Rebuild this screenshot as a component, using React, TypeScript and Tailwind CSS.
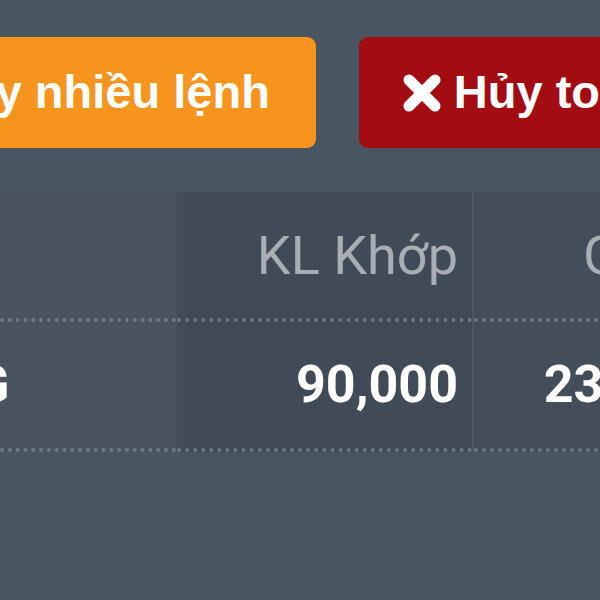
export default function App() {
  return (
    <div className="w-[600px] h-[600px] overflow-hidden bg-[#4a5562]">
      <div className="flex gap-[43px] pt-[37px] ml-[-113px] font-['Liberation_Sans',Arial,sans-serif] font-bold text-[47px] text-white">
        <button className="h-[111px] shrink-0 flex items-center px-[46px] rounded-[9px] bg-[#f7941d] whitespace-nowrap">
          Hủy nhiều lệnh
        </button>
        <button className="h-[111px] shrink-0 flex items-center gap-[12px] pl-[43px] pr-[46px] rounded-[9px] bg-[#a30d11] whitespace-nowrap">
          <svg width="40" height="38" viewBox="0 0 40 38" className="shrink-0">
            <path d="M7 6 L33 32 M33 6 L7 32" stroke="white" strokeWidth="11" strokeLinecap="round" />
          </svg>
          Hủy toàn bộ
        </button>
      </div>

      <div className="mt-[44px] flex font-['Roboto',sans-serif] text-[52px]">
        <div className="w-[176px] shrink-0 bg-[#48535f]">
          <div className="h-[130px] border-b-4 border-dotted border-[#6e7782]" />
          <div className="h-[130px] border-b-4 border-dotted border-[#6e7782] flex items-center">
            <span className="ml-[-26px] font-bold text-white">G</span>
          </div>
        </div>
        <div className="w-[296px] shrink-0 bg-[#404b57] border-l border-[#45505c]">
          <div className="h-[130px] border-b-4 border-dotted border-[#6e7782] flex items-center justify-end pr-[14px] text-[54px] text-[#a9aeb4] whitespace-nowrap">
            KL Khớp
          </div>
          <div className="h-[130px] border-b-4 border-dotted border-[#6e7782] flex items-center justify-end pr-[14px] font-bold text-white">
            90,000
          </div>
        </div>
        <div className="w-[350px] shrink-0 bg-[#434e5a] border-l-2 border-[#4d5864]">
          <div className="h-[130px] border-b-4 border-dotted border-[#6e7782] flex items-center justify-end pr-[28px] text-[54px] text-[#a9aeb4] whitespace-nowrap">
            Giá khớp
          </div>
          <div className="h-[130px] border-b-4 border-dotted border-[#6e7782] flex items-center justify-end pr-[14px] font-bold text-white whitespace-nowrap">
            23,450,000
          </div>
        </div>
      </div>
    </div>
  );
}
